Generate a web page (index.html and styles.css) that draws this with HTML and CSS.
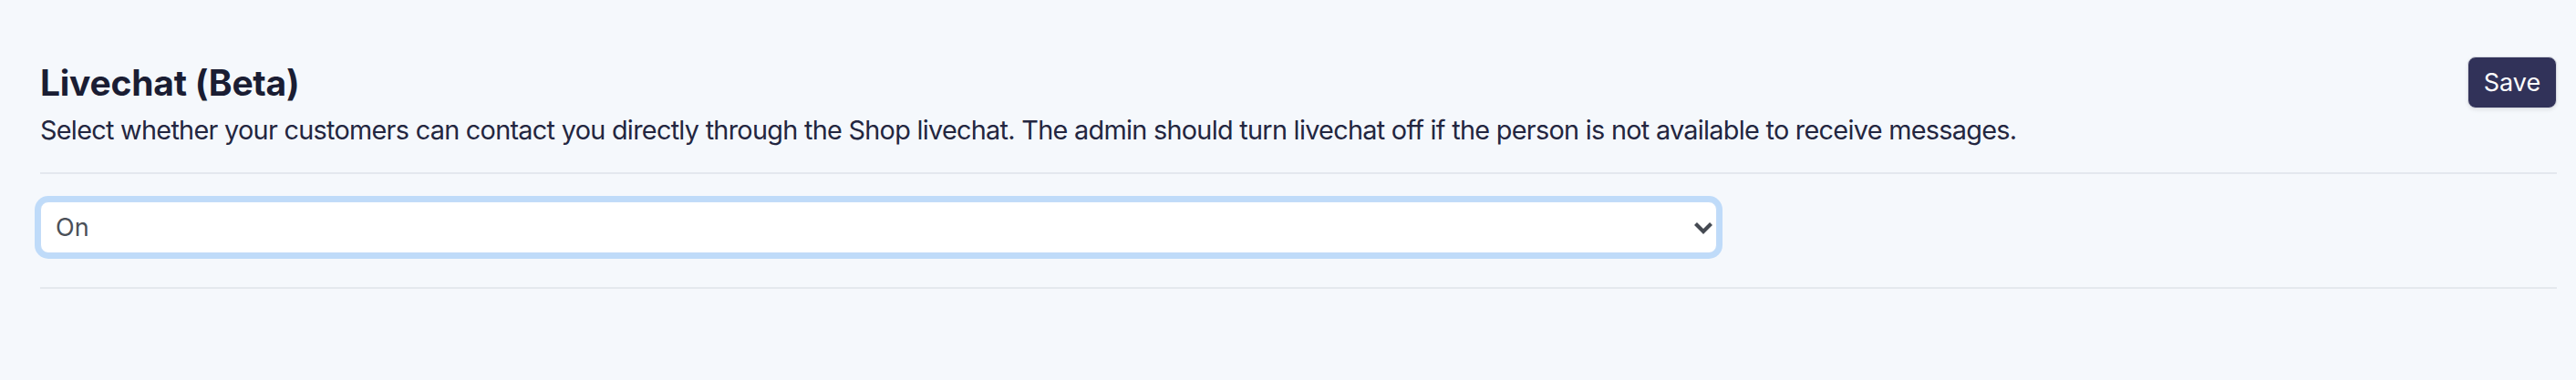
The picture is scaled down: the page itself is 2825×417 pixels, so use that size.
FILE: index.html
```html
<!DOCTYPE html>
<html lang="en">
<head>
<meta charset="utf-8">
<title>Livechat settings</title>
<link rel="stylesheet" href="styles.css">
</head>
<body>
<main class="page">
  <section class="setting">
    <div class="setting-header">
      <div class="setting-text">
        <h2 class="setting-title">Livechat (Beta)</h2>
        <p class="setting-desc">Select whether your customers can contact you directly through the Shop livechat. The admin should turn livechat off if the person is not available to receive messages.</p>
      </div>
      <button class="btn-save" type="button">Save</button>
    </div>
    <div class="setting-body">
      <div class="select-wrap">
        <select class="select">
          <option>On</option>
          <option>Off</option>
        </select>
        <svg class="chevron" viewBox="0 0 22 16" aria-hidden="true"><polyline points="2.5,3.5 11,12 19.5,3.5" fill="none" stroke="currentColor" stroke-width="4.2" stroke-linecap="butt" stroke-linejoin="miter"/></svg>
      </div>
    </div>
  </section>
</main>
</body>
</html>
```

FILE: styles.css
```css
* { box-sizing: border-box; }
html, body { margin: 0; padding: 0; }
body {
  background: #f5f8fc;
  font-family: Inter, "Noto Sans", "Liberation Sans", sans-serif;
  color: #1f2238;
  width: 2825px;
  height: 417px;
  overflow: hidden;
}
.page {
  padding: 62px 21px 0 44px;
}
.setting-header {
  display: flex;
  justify-content: space-between;
  align-items: flex-start;
  padding-bottom: 25px;
  border-bottom: 2px solid #e4e8ee;
}
.setting-title {
  margin: 0;
  padding-top: 4px;
  font-size: 39px;
  line-height: 50px;
  font-weight: 700;
  letter-spacing: -0.25px;
  color: #1a1d33;
}
.setting-desc {
  margin: 5px 0 0;
  font-size: 28.8px;
  line-height: 43.2px;
  letter-spacing: -0.7px;
  color: #232640;
}
.btn-save {
  flex: none;
  width: 98px;
  height: 57px;
  border: 1px solid #d9dbe3;
  border-radius: 9px;
  background: #313259;
  color: #ffffff;
  font-family: Inter, "Noto Sans", "Liberation Sans", sans-serif;
  font-size: 27px;
  line-height: 1;
  box-shadow: 0 2px 4px rgba(0, 0, 0, 0.08);
  padding: 0;
}
.setting-body {
  padding: 30px 0 37px;
  border-bottom: 2px solid #e4e8ee;
}
.select-wrap {
  position: relative;
  width: 1839px;
}
.select {
  display: block;
  width: 100%;
  height: 57px;
  appearance: none;
  -webkit-appearance: none;
  background: #ffffff;
  border: 1px solid #c3dcf8;
  border-radius: 9px;
  box-shadow: 0 0 0 6px #bfdbf9;
  padding: 0 60px 0 16px;
  font-family: Inter, "Noto Sans", "Liberation Sans", sans-serif;
  font-size: 27px;
  color: #4b5058;
  outline: none;
}
.chevron {
  position: absolute;
  right: 4px;
  top: 50%;
  width: 22px;
  height: 16px;
  margin-top: -8px;
  color: #454a52;
  pointer-events: none;
}
```
